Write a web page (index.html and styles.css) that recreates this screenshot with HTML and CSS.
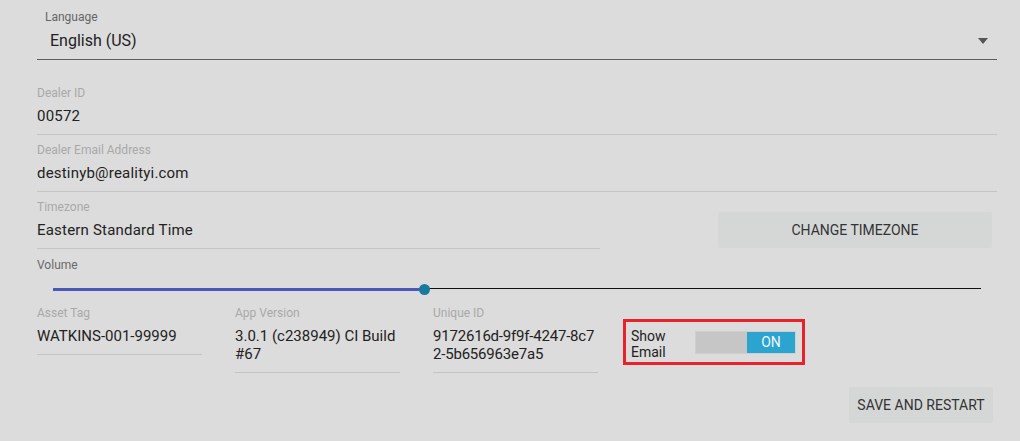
FILE: index.html
```html
<!DOCTYPE html>
<html lang="en">
    <head>
        <meta charset="UTF-8" />
        <meta name="viewport" content="width=device-width, initial-scale=1.0" />
        <title>Settings</title>
        <link rel="stylesheet" href="styles.css">
    </head>
    <body>
        <div class="settings">
            <div class="select">
                <div class="select-label">Language</div>
                <div class="select-value">
                    <span>English (US)</span>
                    <span class="caret"></span>
                </div>
            </div>

            <div class="field">
                <div class="field-label">Dealer ID</div>
                <div class="field-value">00572</div>
            </div>
            <div class="field">
                <div class="field-label">Dealer Email Address</div>
                <div class="field-value">destinyb@realityi.com</div>
            </div>

            <div class="timezone-row">
                <div class="field timezone">
                    <div class="field-label">Timezone</div>
                    <div class="field-value">Eastern Standard Time</div>
                </div>
                <button class="flat-button timezone-button" type="button">CHANGE TIMEZONE</button>
            </div>

            <div class="volume">
                <div class="volume-label">Volume</div>
                <div class="slider">
                    <div class="slider-track"></div>
                    <div class="slider-fill" style="width: 40%"></div>
                    <div class="slider-thumb" style="left: 40%"></div>
                </div>
            </div>

            <div class="info-row">
                <div class="info">
                    <div class="field-label">Asset Tag</div>
                    <div class="info-value">WATKINS-001-99999</div>
                </div>
                <div class="info">
                    <div class="field-label">App Version</div>
                    <div class="info-value">3.0.1 (c238949) CI Build #67</div>
                </div>
                <div class="info unique">
                    <div class="field-label">Unique ID</div>
                    <div class="info-value">9172616d-9f9f-4247-8c72-5b656963e7a5</div>
                </div>
                <div class="show-email">
                    <div class="show-email-label">Show<br>Email</div>
                    <div class="toggle">
                        <span class="toggle-off"></span>
                        <span class="toggle-on">ON</span>
                    </div>
                </div>
            </div>

            <div class="actions">
                <button class="flat-button" type="button">SAVE AND RESTART</button>
            </div>
        </div>
    </body>
</html>
```

FILE: styles.css
```css
body {
    margin: 0;
    background-color: #dcdcdc;
    font-family: Roboto, "Liberation Sans", sans-serif;
    color: #222;
}
.settings {
    padding: 0 23px 0 37px;
}

/* language dropdown */
.select {
    padding-top: 9px;
    padding-bottom: 6px;
    border-bottom: 1px solid #5e5e5e;
}
.select-label {
    padding-left: 8px;
    font-size: 12px;
    line-height: 16px;
    color: #666;
}
.select-value {
    display: flex;
    align-items: center;
    justify-content: space-between;
    margin-top: 4px;
    padding-left: 13px;
    padding-right: 9px;
    font-size: 16px;
    line-height: 24px;
}
.caret {
    width: 0;
    height: 0;
    border-left: 5px solid transparent;
    border-right: 5px solid transparent;
    border-top: 6px solid #555;
}

/* text fields */
.field {
    padding-top: 7px;
    padding-bottom: 7px;
    border-bottom: 1px solid #c4c4c4;
}
.select + .field {
    margin-top: 18px;
}
.field-label {
    font-size: 12px;
    line-height: 16px;
    color: #a9a9a9;
}
.field-value {
    margin-top: 4px;
    font-size: 15px;
    line-height: 22px;
    letter-spacing: 0.2px;
}

.timezone-row {
    display: flex;
    align-items: flex-end;
}
.timezone {
    width: 563px;
}
.flat-button {
    height: 36px;
    border: none;
    border-radius: 2px;
    background-color: #d5d7d7;
    color: #333;
    font-family: Roboto, "Liberation Sans", sans-serif;
    font-size: 14px;
    cursor: pointer;
}
.timezone-button {
    width: 274px;
    margin-left: auto;
    margin-right: 5px;
    margin-bottom: 1px;
}

/* volume slider */
.volume {
    padding-top: 8px;
}
.volume-label {
    font-size: 12px;
    line-height: 16px;
    color: #6a6a6a;
}
.slider {
    position: relative;
    height: 12px;
    margin: 10px 16px 0 16px;
}
.slider-track {
    position: absolute;
    left: 0;
    right: 0;
    top: 5px;
    height: 1px;
    background-color: #111;
}
.slider-fill {
    position: absolute;
    left: 0;
    top: 5px;
    height: 3px;
    background-color: #4a59b8;
}
.slider-thumb {
    position: absolute;
    top: 1px;
    width: 11px;
    height: 11px;
    margin-left: -5px;
    border-radius: 50%;
    background-color: #1a7a9e;
}

/* info row */
.info-row {
    display: flex;
    align-items: flex-start;
    gap: 33px;
    padding-top: 10px;
}
.info {
    width: 165px;
    padding-bottom: 9px;
    border-bottom: 1px solid #c4c4c4;
}
.info-value {
    margin-top: 6px;
    font-size: 15px;
    line-height: 18px;
    word-break: break-all;
}
.unique .info-value {
    letter-spacing: -0.2px;
}

.show-email {
    display: flex;
    align-items: center;
    width: 176px;
    height: 40px;
    margin-top: 14px;
    margin-left: -8px;
    border: 3px solid #e8212b;
}
.show-email-label {
    width: 64px;
    padding-left: 5px;
    padding-top: 3px;
    font-size: 14px;
    line-height: 16px;
}
.toggle {
    display: flex;
    width: 99px;
    height: 21px;
    background-color: #c6c6c6;
    border: 1px solid #cfcfcf;
}
.toggle-off {
    flex: 1;
}
.toggle-on {
    width: 48px;
    background-color: #2ba4d0;
    color: #f2f6f8;
    font-size: 14px;
    line-height: 21px;
    text-align: center;
}

.actions {
    display: flex;
    justify-content: flex-end;
    padding-top: 14px;
    padding-right: 4px;
}
.actions .flat-button {
    width: 144px;
}
```
